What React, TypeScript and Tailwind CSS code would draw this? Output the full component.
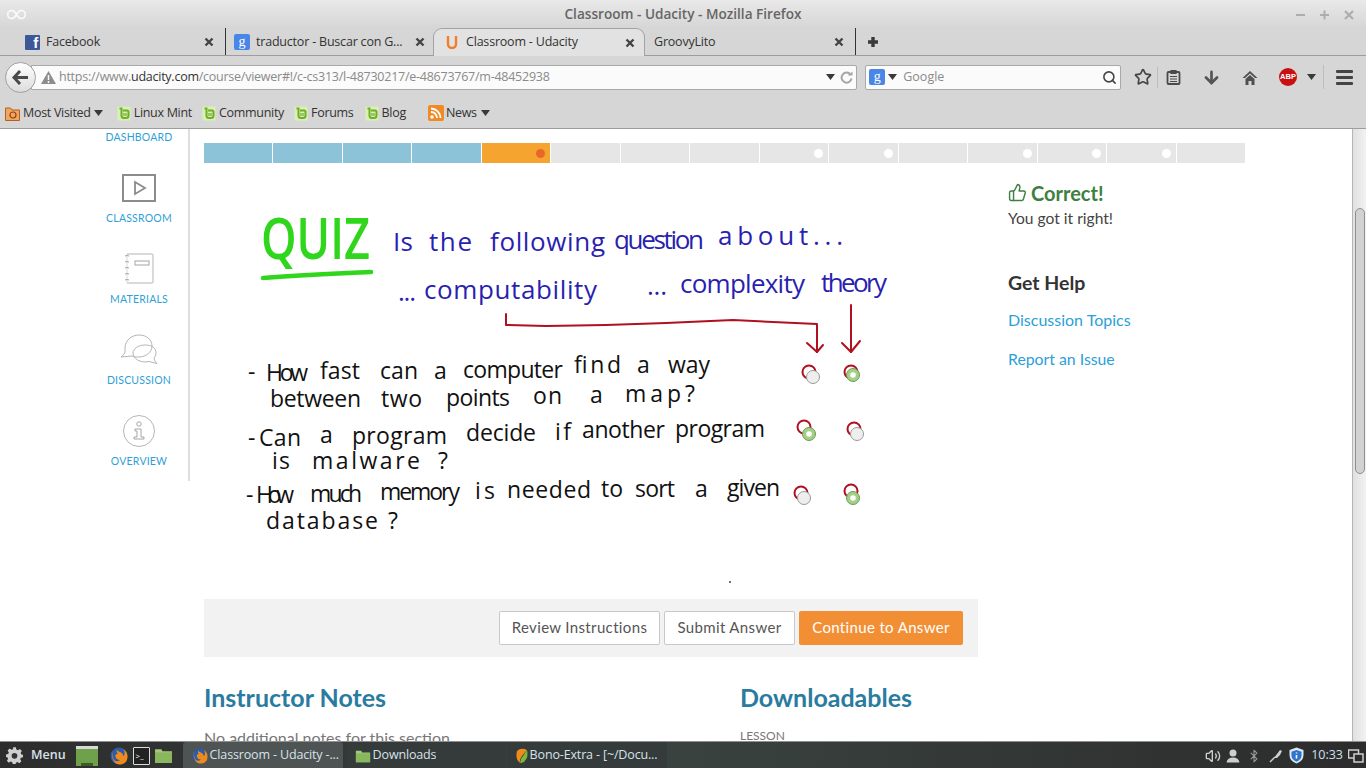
import { ArrowDown, Bluetooth, Search, Star, ThumbsUp, Volume2 } from "lucide-react";

const chrome = "font-['Open_Sans',sans-serif]";

function Caret({ className = "" }: { className?: string }) {
  return (
    <svg width="9" height="6" viewBox="0 0 9 6" className={className}>
      <path d="M0 0h9L4.5 6z" fill="#3a3a3a" />
    </svg>
  );
}

function CloseX() {
  return (
    <svg width="10" height="10" viewBox="0 0 10 10" className="shrink-0">
      <path d="M1.5 1.5l7 7M8.5 1.5l-7 7" stroke="#444" strokeWidth="2.4" />
    </svg>
  );
}

function GoogleIcon() {
  return (
    <span className="flex h-4 w-4 shrink-0 items-center justify-center rounded-[2px] bg-[#4a86e8] font-['Liberation_Serif',serif] text-[14px] leading-none text-white">
      g
    </span>
  );
}

function FacebookIcon() {
  return (
    <span className="flex h-[15px] w-[15px] shrink-0 items-end justify-end overflow-hidden rounded-[1px] bg-[#3b5998] pr-[2px] font-['Liberation_Sans',sans-serif] text-[15px] leading-[14px] font-bold text-white">
      f
    </span>
  );
}

function MintIcon() {
  return (
    <svg width="14" height="15" viewBox="0 0 14 15" className="shrink-0">
      <rect x="0.5" y="0.5" width="13" height="14" rx="1" fill="#d9efb4" />
      <path d="M2.5 2.5h2v7q0 2.500 2.500 2.500h2q2.500 0 2.500-2.500V6q0-1.500-1.500-1.500H6" fill="none" stroke="#6fae28" strokeWidth="2" />
      <path d="M7 7v3M9 7v3" stroke="#6fae28" strokeWidth="1.200" />
    </svg>
  );
}

function FirefoxIcon({ size = 16 }: { size?: number }) {
  return (
    <svg width={size} height={size} viewBox="0 0 16 16" className="shrink-0">
      <circle cx="8" cy="8" r="7.5" fill="#2a5caa" />
      <path d="M2 3q-1 5 1 9t7 3.500q5-1 5.500-6T12 2q2 4 0 6-1-3-3-3.500Q7 4 6 2.500 5.500 5 7 6 4 6 5 9q1 3 4 2.500-3 2.500-5.500 0Q1.500 8 2 3z" fill="#ef8a1c" />
    </svg>
  );
}

function FolderIcon({ size = 18 }: { size?: number }) {
  return (
    <svg width={size} height={size} viewBox="0 0 18 18" className="shrink-0">
      <path d="M1 3h6l1 2h9v11H1z" fill="#a4c97a" />
      <path d="M1 6h16v10H1z" fill="#8ab65d" />
    </svg>
  );
}

function Bookmark({ label, className = "" }: { label: string; className?: string }) {
  return (
    <div className={`flex items-center gap-[3px] ${className}`}>
      <MintIcon />
      <span>{label}</span>
    </div>
  );
}

function BrowserChrome() {
  return (
    <div className={`shrink-0 bg-[#d6d6d6] ${chrome}`}>
      <div className="flex h-[28px] items-center bg-gradient-to-b from-[#e9e9e9] to-[#d6d6d6] pt-[1px] pr-[11px] pl-[7px]">
        <svg width="19" height="11" viewBox="0 0 19 11" className="shrink-0">
          <path d="M9.500 5.500C7.500 2 6 1.500 4.700 1.500a4 4 0 0 0 0 8c1.300 0 2.800-.5 4.800-4zm0 0c2-3.500 3.500-4 4.800-4a4 4 0 0 1 0 8c-1.300 0-2.800-.5-4.800-4z" fill="none" stroke="#fafafa" strokeWidth="1.600" />
        </svg>
        <div className="flex-1 pl-[45px] text-center text-[13.600px] font-semibold text-[#666]">Classroom - Udacity - Mozilla Firefox</div>
        <div className="flex items-center gap-[12px] text-[#a9a9a9]">
          <svg width="12" height="12" viewBox="0 0 12 12"><path d="M1 6h9" stroke="#adadad" strokeWidth="2" /></svg>
          <svg width="12" height="12" viewBox="0 0 12 12"><path d="M1 6h9M5.500 1.500v9" stroke="#adadad" strokeWidth="2" /></svg>
          <svg width="12" height="12" viewBox="0 0 12 12"><path d="M2 2l8 8M10 2l-8 8" stroke="#adadad" strokeWidth="2.200" /></svg>
        </div>
      </div>

      <div className="flex h-[28px] items-center border-b border-[#9d9d9d] pl-[25px] text-[12.500px] tracking-[-0.2px] text-[#333]">
        <div className="flex h-full w-[201px] items-center border-r border-[#333] pt-[1px] pr-[11px]">
          <FacebookIcon />
          <span className="ml-[6px] flex-1 truncate">Facebook</span>
          <CloseX />
        </div>
        <div className="flex h-full w-[207px] items-center px-[8px] pt-[1px]">
          <GoogleIcon />
          <span className="ml-[6px] flex-1 truncate">traductor - Buscar con G...</span>
          <CloseX />
        </div>
        <div className="relative z-10 -mb-px flex h-[28px] w-[212px] items-center rounded-t-[9px] border border-b-0 border-[#a3a3a3] bg-[#e2e2e2] pr-[9px] pl-[11px]">
          <svg width="14" height="15" viewBox="0 0 14 15" className="shrink-0">
            <path d="M3 1v8q0 4 4 4t4-4V1" fill="none" stroke="#ef7f2c" strokeWidth="2.400" />
          </svg>
          <span className="ml-[7px] flex-1 truncate">Classroom - Udacity</span>
          <CloseX />
        </div>
        <div className="flex h-full w-[211px] items-center border-r border-[#333] pt-[1px] pr-[11px] pl-[9px]">
          <span className="flex-1 truncate">GroovyLito</span>
          <CloseX />
        </div>
        <svg width="12" height="12" viewBox="0 0 12 12" className="ml-[11px]">
          <path d="M1 6h10M6 1v10" stroke="#3a3a3a" strokeWidth="3.400" />
        </svg>
      </div>

      <div className="flex h-[42px] items-center pr-[13px] pl-[5px]">
        <div className="z-10 flex h-[31px] w-[31px] shrink-0 items-center justify-center rounded-full border border-[#a0a0a0] bg-gradient-to-b from-white to-[#dcdcdc]">
          <svg width="17" height="15" viewBox="0 0 17 15">
            <path d="M8 1L2 7.500 8 14M2.500 7.500H16" fill="none" stroke="#4a4a4a" strokeWidth="3" />
          </svg>
        </div>
        <div className="-ml-[5px] flex h-[25px] w-[827px] items-center rounded-r-[2px] border border-[#a9a9a9] bg-[#fbfbfb] pr-[3px] pl-[9px] text-[12.500px] tracking-[-0.25px]">
          <svg width="15" height="13" viewBox="0 0 15 13" className="shrink-0">
            <path d="M7.500 0L15 13H0z" fill="#8c8c8c" />
            <path d="M7.500 4v5M7.500 10v2" stroke="#fbfbfb" strokeWidth="1.500" />
          </svg>
          <span className="ml-[3px] flex-1 truncate text-[#8a8a8a]">
            https://www.<span className="text-[#333]">udacity.com</span>/course/viewer#!/c-cs313/l-48730217/e-48673767/m-48452938
          </span>
          <Caret />
          <svg width="13" height="13" viewBox="0 0 13 13" className="ml-[5px]">
            <path d="M10.500 3.500A5 5 0 1 0 11.500 7.500" fill="none" stroke="#a6a6a6" strokeWidth="2" />
            <path d="M7.500 4.500h5v-4z" fill="#a6a6a6" />
          </svg>
        </div>
        <div className="ml-[8px] flex h-[25px] w-[256px] items-center rounded-[2px] border border-[#a9a9a9] bg-[#fbfbfb] px-[3px] text-[12.500px] text-[#8a8a8a]">
          <GoogleIcon />
          <Caret className="ml-[3px]" />
          <span className="ml-[6px] flex-1">Google</span>
          <Search size={15} strokeWidth={2.500} className="text-[#444]" />
        </div>
        <Star size={18} strokeWidth={2.200} className="ml-[13px] shrink-0 text-[#444]" />
        <div className="ml-[5px] h-[21px] w-px bg-[#bdbdbd]" />
        <svg width="15" height="16" viewBox="0 0 15 16" className="ml-[8px] shrink-0">
          <rect x="1.500" y="3" width="12" height="12" rx="1" fill="none" stroke="#4a4a4a" strokeWidth="1.800" />
          <path d="M5 1.500h5v3H5zM4 7.500h7M4 10h7M4 12.500h7" fill="#4a4a4a" stroke="#4a4a4a" strokeWidth="1.200" />
        </svg>
        <ArrowDown size={19} strokeWidth={3.400} className="ml-[21px] shrink-0 text-[#555]" />
        <svg width="16" height="15" viewBox="0 0 16 15" className="ml-[21px] shrink-0">
          <path d="M8 1L0.500 8h2.500L8 3.500 13 8h2.500zM3.500 9L8 5l4.500 4v6h-3v-4h-3v4h-3z" fill="#4f4f4f" />
        </svg>
        <div className="ml-[21px] flex h-[18px] w-[18px] shrink-0 items-center justify-center rounded-full bg-[#c81010] font-['Liberation_Sans',sans-serif] text-[7.500px] leading-none font-bold text-white">
          ABP
        </div>
        <Caret className="ml-[10px]" />
        <div className="ml-[7px] h-[24px] w-px bg-[#bdbdbd]" />
        <div className="ml-[12px] flex w-[17px] flex-col gap-[3px]">
          <div className="h-[3px] rounded-[1px] bg-[#444]" />
          <div className="h-[3px] rounded-[1px] bg-[#444]" />
          <div className="h-[3px] rounded-[1px] bg-[#444]" />
        </div>
      </div>

      <div className="flex h-[31px] items-center border-b border-[#9d9d9d] pl-[5px] text-[12.500px] tracking-[-0.3px] text-[#333]">
        <svg width="15" height="15" viewBox="0 0 15 15" className="shrink-0">
          <path d="M0.500 2h5l1.500 2h7.500v10.500H0.500z" fill="#f0a560" stroke="#b55f1c" />
          <circle cx="8" cy="9" r="3" fill="none" stroke="#8a4512" strokeWidth="1.200" />
        </svg>
        <span className="ml-[3px]">Most Visited</span>
        <Caret className="ml-[3px]" />
        <Bookmark label="Linux Mint" className="ml-[14px]" />
        <Bookmark label="Community" className="ml-[10px]" />
        <Bookmark label="Forums" className="ml-[10px]" />
        <Bookmark label="Blog" className="ml-[11px]" />
        <svg width="16" height="16" viewBox="0 0 16 16" className="ml-[22px] shrink-0">
          <rect width="16" height="16" rx="2" fill="#f08a24" />
          <circle cx="4" cy="12" r="1.800" fill="#fff" />
          <path d="M3 7a6 6 0 0 1 6 6M3 3.500A9.500 9.500 0 0 1 12.500 13" fill="none" stroke="#fff" strokeWidth="1.800" />
        </svg>
        <span className="ml-[2px]">News</span>
        <Caret className="ml-[4px]" />
      </div>
    </div>
  );
}

function NavItem({ label, icon }: { label: string; icon: React.ReactNode }) {
  return (
    <div className="flex h-[81px] flex-col items-center">
      <div className="flex h-[49px] items-center justify-center pt-[4px]">{icon}</div>
      <div className="mt-[1px] text-[10.500px] tracking-[0.2px] text-[#2f9fd8]">{label}</div>
    </div>
  );
}

function Sidebar() {
  return (
    <aside className="ml-[90px] h-[352px] w-[100px] shrink-0 border-r-2 border-[#dedede]">
      <div className="h-[24px] pt-[1px] text-center text-[10.500px] tracking-[0.2px] text-[#2f9fd8]">DASHBOARD</div>
      <div className="mt-[8px]">
        <NavItem
          label="CLASSROOM"
          icon={
            <svg width="34" height="28" viewBox="0 0 34 28">
              <rect x="1" y="1" width="32" height="26" fill="none" stroke="#8c8c8c" strokeWidth="2" />
              <path d="M13 8l10 6-10 6z" fill="none" stroke="#8c8c8c" strokeWidth="1.800" />
            </svg>
          }
        />
        <NavItem
          label="MATERIALS"
          icon={
            <svg width="30" height="31" viewBox="0 0 30 31">
              <path d="M3 1h25a1 1 0 0 1 1 1v27a1 1 0 0 1-1 1H3" fill="none" stroke="#b5b5b5" />
              <path d="M3 1v29" stroke="#dadada" />
              <path d="M1 3q2-1 4 0M1 9q2-1 4 0M1 15q2-1 4 0M1 21q2-1 4 0M1 27q2-1 4 0" fill="none" stroke="#a5a5a5" />
              <rect x="11" y="8" width="14" height="4" fill="none" stroke="#a5a5a5" />
            </svg>
          }
        />
        <NavItem
          label="DISCUSSION"
          icon={
            <svg width="38" height="31" viewBox="0 0 38 31">
              <path d="M5 14C5 7 11 1 19 1s13 5 13 11-6 11-13 11c-3 0-5 0-7-1l-11 1q5-3 4-9z" fill="none" stroke="#b5b5b5" />
              <path d="M13 19c0-4 5-8 12-8s11 3 11 8c0 2-1 4-2 5q0 3 3 5.500l-8-2c-9 2-16-3-16-8.500z" fill="none" stroke="#b5b5b5" />
            </svg>
          }
        />
        <NavItem
          label="OVERVIEW"
          icon={
            <svg width="32" height="32" viewBox="0 0 32 32">
              <circle cx="16" cy="16" r="15.500" fill="none" stroke="#b5b5b5" />
              <circle cx="16" cy="9" r="2.200" fill="none" stroke="#a5a5a5" />
              <path d="M12 14h6v8h3v2H11v-2h3v-6h-2z" fill="none" stroke="#a5a5a5" />
            </svg>
          }
        />
      </div>
    </aside>
  );
}

const segments = Array.from({ length: 15 }, (_, i) => i);
const whiteDots = [8, 9, 11, 12, 13];

function ProgressBar() {
  return (
    <div className="grid h-[20px] w-[1041px] grid-cols-15 gap-px">
      {segments.map((i) => (
        <div
          key={i}
          className={`flex items-center justify-end pr-[5px] ${i < 4 ? "bg-[#8cc3d8]" : i === 4 ? "bg-[#f5a52f]" : "bg-[#e6e6e6]"}`}
        >
          {i === 4 && <div className="h-[9px] w-[9px] rounded-full bg-[#e8682a]" />}
          {whiteDots.includes(i) && <div className="h-[9px] w-[9px] rounded-full bg-white" />}
        </div>
      ))}
    </div>
  );
}

type Word = [string, number, number, number];

const blueWords: Word[] = [
  ["Is", 393, 251, 20],
  ["the", 429, 251, 43],
  ["following", 490, 251, 115],
  ["question", 614, 249, 90],
  ["about...", 718, 245, 125],
  ["...", 398, 301, 18],
  ["computability", 424, 299, 173],
  ["...", 647, 295, 20],
  ["complexity", 680, 293, 125],
  ["theory", 821, 292, 66],
];
const blackWords: Word[] = [
  ["-", 248, 380, 9],
  ["How", 266, 381, 42],
  ["fast", 320, 379, 40],
  ["can", 380, 379, 38],
  ["a", 434, 379, 14],
  ["computer", 463, 378, 100],
  ["find", 574, 373, 47],
  ["a", 637, 373, 15],
  ["way", 668, 373, 42],
  ["between", 270, 407, 91],
  ["two", 381, 407, 41],
  ["points", 446, 406, 64],
  ["on", 533, 404, 29],
  ["a", 590, 403, 15],
  ["map?", 625, 402, 70],
  ["-", 248, 446, 8],
  ["Can", 259, 446, 42],
  ["a", 320, 443, 15],
  ["program", 352, 444, 95],
  ["decide", 466, 441, 70],
  ["if", 555, 440, 16],
  ["another", 582, 438, 83],
  ["program", 675, 437, 90],
  ["is", 272, 469, 18],
  ["malware", 312, 469, 108],
  ["?", 438, 469, 12],
  ["-", 246, 503, 8],
  ["How", 256, 503, 38],
  ["much", 310, 502, 52],
  ["memory", 380, 500, 80],
  ["is", 475, 499, 20],
  ["needed", 507, 498, 84],
  ["to", 601, 497, 22],
  ["sort", 635, 497, 40],
  ["a", 695, 497, 15],
  ["given", 727, 496, 53],
  ["database", 266, 529, 112],
  ["?", 388, 529, 14],
];

const greyRadios = [[813, 377], [857, 434], [804, 498]];
const greenRadios = [[853, 375], [809, 434], [853, 498]];
const redRings = [[809, 372], [851, 372], [804, 427], [854, 429], [801, 493], [851, 491]];

function Whiteboard() {
  return (
    <div className="relative h-[436px] w-full">
      <svg width="774" height="436" viewBox="204 163 774 436" className="absolute inset-0">
        <text x="261" y="259" textLength="109" lengthAdjust="spacingAndGlyphs" fontFamily="Open Sans" fontWeight="600" fontSize="58" fill="#2fd61c">
          QUIZ
        </text>
        <path d="M263 278Q300 275 371 272" fill="none" stroke="#2fd61c" strokeWidth="4.500" strokeLinecap="round" />
        <g fontFamily="Open Sans" fontSize="26" fill="#2a1fb0">
          {blueWords.map(([t, x, y, w], i) => (
            <text key={i} x={x} y={y} textLength={w} lengthAdjust="spacing">
              {t}
            </text>
          ))}
        </g>
        <g fontFamily="Open Sans" fontSize="23" fill="#111">
          {blackWords.map(([t, x, y, w], i) => (
            <text key={i} x={x} y={y} textLength={w} lengthAdjust="spacing">
              {t}
            </text>
          ))}
        </g>
        <g fill="none" stroke="#b01020" strokeWidth="2" strokeLinecap="round" strokeLinejoin="round">
          <path d="M506 314v11l40 1 60-1 60-2 67-3 84 4v28" />
          <path d="M807 343l10 9 6-7" />
          <path d="M851 305v47" />
          <path d="M842 343l9 9 9-11" />
          {redRings.map(([x, y], i) => (
            <circle key={i} cx={x} cy={y} r="6.500" />
          ))}
        </g>
        {greyRadios.map(([x, y], i) => (
          <circle key={i} cx={x} cy={y} r="6.500" fill="#eeeeee" stroke="#9a9a9a" />
        ))}
        {greenRadios.map(([x, y], i) => (
          <g key={i}>
            <circle cx={x} cy={y} r="6.500" fill="#a5cf86" stroke="#6f9a58" />
            <circle cx={x} cy={y} r="2.800" fill="#fff" />
          </g>
        ))}
        <circle cx="730" cy="582" r="1" fill="#444" />
      </svg>
    </div>
  );
}

function Content() {
  return (
    <div className="flex min-h-0 flex-1 overflow-hidden bg-white font-['Lato',sans-serif]">
      <Sidebar />
      <div className="ml-[14px] w-[1041px] shrink-0 pt-[14px]">
        <ProgressBar />
        <div className="flex">
          <div className="w-[774px] shrink-0">
            <Whiteboard />
            <div className="flex h-[58px] items-center justify-end gap-[4px] bg-[#f2f2f2] pr-[15px] text-[15px] tracking-[0.35px]">
              <button className="h-[34px] w-[161px] rounded-[2px] border border-[#c8c8c8] bg-white pb-[1px] text-[#555]">Review Instructions</button>
              <button className="h-[34px] w-[131px] rounded-[2px] border border-[#c8c8c8] bg-white pb-[1px] text-[#555]">Submit Answer</button>
              <button className="h-[34px] w-[164px] rounded-[2px] bg-[#f28f35] pb-[1px] text-white">Continue to Answer</button>
            </div>
            <div className="flex pt-[26px]">
              <div className="w-[536px]">
                <h2 className="text-[25px] leading-[28px] font-bold text-[#2a7ba0]">Instructor Notes</h2>
                <p className="mt-[16px] text-[16px] leading-[22px] text-[#777]">No additional notes for this section</p>
              </div>
              <div className="w-[238px]">
                <h2 className="text-[25px] leading-[28px] font-bold text-[#2a7ba0]">Downloadables</h2>
                <p className="mt-[16px] text-[12px] text-[#777]">LESSON</p>
              </div>
            </div>
          </div>
          <div className="ml-[30px] w-[237px] pt-[18px]">
            <div className="flex items-center gap-[4px] text-[20px] leading-[25px] font-bold text-[#3d8040]">
              <ThumbsUp size={19} strokeWidth={1.800} className="-mt-[3px]" />
              <span>Correct!</span>
            </div>
            <p className="text-[15.600px] leading-[24px] text-[#444]">You got it right!</p>
            <h3 className="mt-[40px] text-[19.500px] leading-[25px] font-bold text-[#333]">Get Help</h3>
            <a className="mt-[13px] block text-[16px] leading-[24px] text-[#2b9fd8]">Discussion Topics</a>
            <a className="mt-[15px] block text-[15.800px] leading-[24px] text-[#2b9fd8]">Report an Issue</a>
          </div>
        </div>
      </div>
      <div className="ml-auto flex w-[14px] shrink-0 flex-col border-l border-[#b5b5b5] bg-gradient-to-r from-[#e0e0e0] to-[#f2f2f2] pt-[79px] pl-[2px]">
        <div className="h-[266px] w-[10px] rounded-[5px] border border-[#8f8f8f] bg-[#d2d2d2]" />
      </div>
    </div>
  );
}

function TaskButton({ icon, label, active = false, width }: { icon: React.ReactNode; label: string; active?: boolean; width: string }) {
  return (
    <div className={`flex h-[26px] items-center gap-[2px] rounded-t-[3px] pt-[1px] pl-[9px] tracking-[-0.15px] ${width} ${active ? "bg-[#4e5453]" : "bg-[#343b3a]"}`}>
      {icon}
      <span className="truncate">{label}</span>
    </div>
  );
}

function Panel() {
  return (
    <div className={`flex h-[27px] shrink-0 items-end border-t border-[#8f8f8f] bg-gradient-to-r from-[#2d2d2d] via-[#39423f] to-[#2c2c2c] text-[12.500px] text-[#d8e2ea] ${chrome}`}>
      <div className="flex h-full items-center pt-[1px] pl-[6px]">
        <svg width="17" height="17" viewBox="0 0 24 24" className="shrink-0">
          <path d="M10 2h4l.6 3 2.400 1 2.600-1.700 2.800 2.800L20.700 9.700l1 2.300 2.300.5v3.500l-3 .5-1 2.400 1.700 2.600-2.800 2.800-2.600-1.700-2.300 1-.5 2.400h-4l-.6-3-2.400-1L4 23.700 1.200 20.900 2.900 18.300 2 16l-2-.5v-3.500l3-.5 1-2.400L2.300 6.500 5.100 3.700 7.700 5.400 10 4.500z" fill="#cfcfcf" transform="translate(0 -1.500)" />
          <circle cx="12" cy="12.500" r="4" fill="#353535" />
        </svg>
        <span className="ml-[8px] font-semibold">Menu</span>
        <svg width="22" height="22" viewBox="0 0 22 22" className="ml-[10px] shrink-0">
          <rect x="0" y="1" width="22" height="20" fill="#6fa14a" />
          <rect x="0" y="1" width="22" height="3" fill="#d8d8d8" />
          <rect x="5" y="18" width="12" height="3" fill="#3d5c28" />
        </svg>
        <div className="ml-[12px]"><FirefoxIcon size={18} /></div>
        <div className="ml-[5px] flex h-[18px] w-[17px] shrink-0 items-center rounded-[1px] border border-[#ddd] bg-[#222] pl-[2px] text-[8px] leading-none text-white">&gt;_</div>
        <div className="ml-[4px]"><FolderIcon size={19} /></div>
      </div>
      <div className="ml-[10px] flex gap-[3px] self-end">
        <TaskButton width="w-[160px]" active label="Classroom - Udacity -..." icon={<FirefoxIcon size={16} />} />
        <TaskButton width="w-[159px]" label="Downloads" icon={<FolderIcon size={16} />} />
        <TaskButton
          width="w-[159px]"
          label="Bono-Extra - [~/Docu..."
          icon={
            <svg width="16" height="16" viewBox="0 0 16 16" className="-mr-[2px] -ml-[3px] shrink-0">
              <path d="M3 3q4-4 10-1L8 8q-3 4-2 7-5-4-3-12z" fill="#ef8a1c" />
              <path d="M13 2q2 7-3 12-2 1-4 1 0-4 3-7z" fill="#7db83c" />
            </svg>
          }
        />
      </div>
      <div className="ml-auto flex h-full items-center pt-[1px] pr-[2px]">
        <Volume2 size={16} strokeWidth={2} className="text-[#cfcfcf]" />
        <svg width="14" height="14" viewBox="0 0 14 14" className="ml-[5px] shrink-0">
          <circle cx="7" cy="4" r="3.500" fill="#cfcfcf" />
          <path d="M0.500 13.500q1-5 6.500-5t6.500 5z" fill="#cfcfcf" />
        </svg>
        <Bluetooth size={14} strokeWidth={1.800} className="ml-[7px] text-[#9a9a9a]" />
        <svg width="14" height="14" viewBox="0 0 14 14" className="ml-[8px] shrink-0">
          <path d="M1 13L6 8" stroke="#cfcfcf" strokeWidth="1.500" />
          <path d="M5 9l3-4 3-4 2 1-2 4-3 3z" fill="#cfcfcf" />
        </svg>
        <svg width="15" height="17" viewBox="0 0 15 17" className="ml-[6px] shrink-0">
          <path d="M7.500 0.500L14.500 3v5q0 6-7 8.500-7-2.500-7-8.500V3z" fill="#dfe8f2" />
          <path d="M7.500 3L12.500 4.800v3.700q0 4-5 6.200-5-2.200-5-6.200V4.800z" fill="#2c75c9" />
          <path d="M7.500 5.500v1M7.500 8v3.500" stroke="#fff" strokeWidth="1.600" />
        </svg>
        <span className="ml-[7px] text-[#cfe0f0]">10:33</span>
        <svg width="16" height="14" viewBox="0 0 16 14" className="ml-[5px] shrink-0">
          <rect x="0.500" y="1" width="10" height="8" fill="none" stroke="#d0d0d0" strokeWidth="1.500" />
          <rect x="6" y="5" width="9" height="8" fill="#2d2d2d" stroke="#d0d0d0" strokeWidth="1.500" />
        </svg>
      </div>
    </div>
  );
}

export default function App() {
  return (
    <div className="flex h-screen w-full flex-col overflow-hidden">
      <BrowserChrome />
      <Content />
      <Panel />
    </div>
  );
}
